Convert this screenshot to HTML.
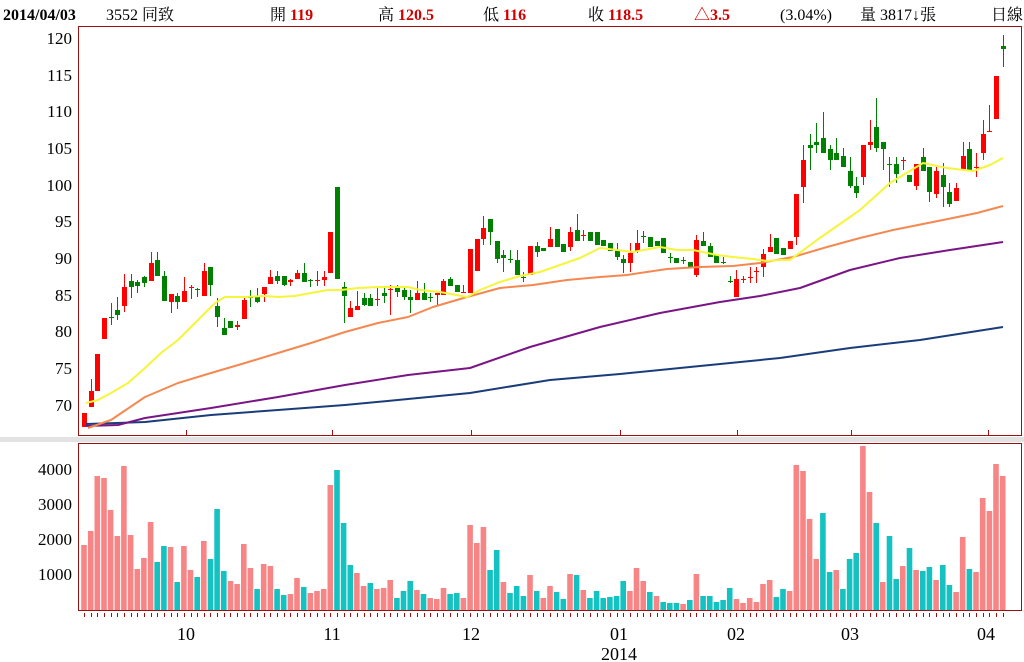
<!DOCTYPE html>
<html><head><meta charset="utf-8">
<style>
html,body{margin:0;padding:0;background:#fff;width:1024px;height:662px;overflow:hidden}
svg{display:block}
text{font-family:"Liberation Serif","Noto Serif CJK SC","Noto Sans CJK TC",serif}
</style></head><body>
<svg id="s" width="1024" height="662" viewBox="0 0 1024 662" xmlns="http://www.w3.org/2000/svg">
<rect x="0" y="0" width="1024" height="662" fill="#fff"/>
<!-- header -->
<g font-size="16">
<text x="3" y="20" font-weight="bold" fill="#000">2014/04/03</text>
<text x="106" y="20" fill="#000">3552 同致</text>
<text x="270" y="20" fill="#000">開 <tspan fill="#d00000" font-weight="bold">119</tspan></text>
<text x="378" y="20" fill="#000">高 <tspan fill="#d00000" font-weight="bold">120.5</tspan></text>
<text x="483" y="20" fill="#000">低 <tspan fill="#d00000" font-weight="bold">116</tspan></text>
<text x="588" y="20" fill="#000">收 <tspan fill="#d00000" font-weight="bold">118.5</tspan></text>
<text x="694" y="20" fill="#d00000" font-weight="bold">△3.5</text>
<text x="780" y="20" fill="#000">(3.04%)</text>
<text x="860" y="20" fill="#000">量 3817↓張</text>
<text x="991" y="20" fill="#000">日線</text>
</g>
<!-- gray band -->
<rect x="0" y="437" width="1024" height="5" fill="#e2e2e2"/>
<!-- frames -->
<rect x="78.5" y="26.5" width="943" height="409" fill="#fff" stroke="#9a1010" stroke-width="1"/>
<rect x="78.5" y="443.5" width="943" height="167" fill="#fff" stroke="#9a1010" stroke-width="1"/>
<!-- price labels -->
<g font-size="17" text-anchor="end" fill="#000">
<text x="72" y="44">120</text><text x="72" y="81">115</text><text x="72" y="117">110</text>
<text x="72" y="154">105</text><text x="72" y="191">100</text><text x="72" y="227">95</text>
<text x="72" y="264">90</text><text x="72" y="301">85</text><text x="72" y="337">80</text>
<text x="72" y="374">75</text><text x="72" y="411">70</text>
<text x="72" y="475">4000</text><text x="72" y="510">3000</text><text x="72" y="545">2000</text><text x="72" y="580">1000</text>
</g>
<!-- month labels -->
<g font-size="18" text-anchor="middle" fill="#000">
<text x="186" y="640">10</text><text x="332" y="640">11</text><text x="471" y="640">12</text>
<text x="619" y="640">01</text><text x="619" y="660">2014</text>
<text x="736" y="640">02</text><text x="850" y="640">03</text><text x="986" y="640">04</text>
</g>
<!-- main ticks -->
<g stroke="#9a1010" stroke-width="1">
<line x1="186.5" y1="430" x2="186.5" y2="435"/><line x1="332.5" y1="430" x2="332.5" y2="435"/>
<line x1="471.5" y1="430" x2="471.5" y2="435"/><line x1="620.5" y1="430" x2="620.5" y2="435"/>
<line x1="737.5" y1="430" x2="737.5" y2="435"/><line x1="851.5" y1="430" x2="851.5" y2="435"/>
<line x1="988.5" y1="430" x2="988.5" y2="435"/>
</g>
<g id="vol"></g>
<g id="ticks"></g>
<g id="cand"></g>
<!-- MAs -->
<g fill="none" stroke-width="2" stroke-linejoin="round">
<polyline stroke="#1a3d7a" points="86,424 145,422 211,415 278,410 345,405 408,399 470,393 550,380 620,374 700,366 780,358 850,348 920,340 1003,327"/>
<polyline stroke="#7a1585" points="86,426 118,425 145,418 211,408 278,397 345,385 408,375 470,368 530,347 600,327 660,313 720,302 760,296 800,288 850,270 900,258 950,250 1003,242"/>
<polyline stroke="#f58850" points="88,428 111,420 145,397 178,383 211,373 245,363 278,353 311,343 345,332 378,323 408,317 433,307 467,297 500,288 533,285 567,280 600,277 627,275 667,269 700,267 733,266 760,263 793,257 827,247 860,238 893,230 943,220 977,213 1003,206"/>
<polyline stroke="#f5f53a" points="86,403 98,400 111,393 128,383 145,368 161,353 178,340 191,327 205,313 215,303 225,297 245,297 265,296 278,297 295,296 311,293 328,290 341,290 358,288 378,287 395,287 408,287 420,290 440,292 467,297 480,290 500,282 520,276 540,272 560,265 580,258 600,248 617,250 633,252 660,247 677,250 693,250 717,255 733,257 753,259 767,261 780,260 790,260 817,240 860,210 890,183 923,163 947,168 973,171 990,165 1003,158"/>
</g>
</svg>
<script>
var NS="http://www.w3.org/2000/svg";
function el(p,n,a){var e=document.createElementNS(NS,n);for(var k in a)e.setAttribute(k,a[k]);p.appendChild(e);}
var X0=84,SP=6.657;
var V="65p 79p 134p 132p 100p 74p 144p 75p 41p 52p 88p 48t 64t 63p 28t 64p 40p 33t 69p 51t 101t 39t 29p 26p 66p 42p 21t 46p 44p 21t 15t 16p 32p 23t 17p 19p 21p 125p 140t 87t 45t 37p 24p 27t 21p 22p 30p 12t 19t 29t 20p 16t 12p 11p 22p 16t 17t 12p 85p 67p 83p 40t 60t 28p 17t 24t 14t 35p 19t 12p 24p 18t 11t 36p 35t 20p 12t 19t 12t 13t 14t 29t 19p 42p 29p 18t 14p 8t 7t 7t 6p 10t 36p 14t 14t 8t 10t 22t 11p 7p 12p 8p 26p 30p 13t 21t 19p 145p 139p 91p 51p 97t 38t 40p 21t 51t 57t 164p 118p 87t 28p 74t 31t 44p 62t 40p 39t 43t 30p 45t 25t 18p 73p 41t 38p 112p 99p 146p 134p".split(" ");
var vg=document.getElementById("vol"),tg=document.getElementById("ticks");
V.forEach(function(s,i){var h=parseFloat(s),c=s.slice(-1)=="p"?"#f88585":"#14c2c2";var x=X0+i*SP;
el(vg,"rect",{x:(x-2.8).toFixed(1),y:610-h,width:5.6,height:h,fill:c});
el(tg,"rect",{x:Math.round(x),y:613,width:1,height:4,fill:"#9a1010"});});
var C=[[413,427,413,427,1],[391,407,379,407,1],[354,391,354,391,1],[318,339,318,339,1],[317,317,303,325,0],[310,315,297,320,0],[287,306,274,312,1],[281,287,274,298,0],[282,286,280,293,0],[277,283,276,287,0],[263,281,252,281,1],[260,276,252,276,0],[276,301,271,301,0],[294,302,294,313,1],[296,302,293,309,0],[291,302,277,302,1],[287,287,285,299,1],[289,289,288,297,0],[271,296,263,296,1],[267,285,267,296,0],[306,317,298,327,0],[328,335,318,335,0],[321,328,321,328,0],[325,327,321,330,1],[300,319,296,319,1],[297,297,290,307,0],[297,302,288,303,0],[287,294,287,302,1],[277,284,270,284,1],[276,281,271,284,0],[276,285,276,286,0],[280,282,279,286,1],[273,279,270,279,1],[273,282,263,282,0],[280,280,279,287,0],[280,280,271,286,1],[277,280,271,286,1],[232,273,232,273,1],[187,279,187,279,0],[287,296,282,323,0],[308,317,301,317,1],[306,310,291,310,1],[298,305,293,306,0],[298,306,294,306,0],[299,299,288,306,1],[293,296,288,303,0],[289,289,285,315,1],[288,292,285,297,0],[290,297,288,300,0],[297,300,290,313,0],[293,300,281,300,1],[293,300,283,300,0],[297,297,293,302,0],[293,295,293,305,1],[281,295,279,295,1],[279,286,277,286,0],[285,292,285,292,0],[292,292,285,292,1],[249,293,249,293,1],[239,271,239,271,1],[228,239,216,245,1],[219,232,219,245,0],[241,259,241,263,0],[255,258,250,272,0],[259,259,250,263,0],[260,275,250,275,0],[277,277,272,282,0],[246,275,246,275,1],[246,252,242,257,0],[248,251,248,251,0],[239,247,227,247,1],[229,247,229,247,0],[244,252,244,252,0],[232,247,227,251,1],[230,241,214,241,0],[235,235,230,241,1],[232,241,232,241,0],[232,245,232,245,0],[240,246,240,246,0],[243,251,243,251,0],[251,257,243,260,0],[259,263,255,273,0],[253,263,243,272,1],[243,251,230,253,1],[236,236,231,243,0],[237,247,237,247,0],[241,246,241,246,0],[238,253,238,253,0],[257,257,253,263,0],[258,263,258,263,0],[260,260,257,264,0],[262,267,262,267,0],[240,275,235,277,1],[241,246,232,246,0],[246,257,243,257,0],[255,263,255,263,0],[262,262,257,264,0],[281,281,276,283,0],[279,297,270,297,1],[279,279,276,283,1],[277,277,267,283,1],[271,271,267,283,1],[254,267,249,277,1],[247,252,234,252,1],[238,254,238,254,0],[248,255,248,255,0],[241,249,241,249,1],[194,237,194,245,1],[160,187,145,203,1],[145,148,134,170,0],[142,145,123,153,0],[138,153,112,153,0],[149,160,145,170,0],[153,160,138,160,0],[156,167,148,167,0],[171,186,157,188,0],[186,193,177,198,0],[145,177,145,185,1],[142,145,120,150,1],[127,148,98,152,0],[142,149,142,170,0],[164,164,157,187,0],[164,174,157,183,0],[160,160,157,170,1],[175,182,175,182,0],[164,186,164,190,1],[157,171,148,171,0],[167,192,167,202,0],[171,194,167,198,1],[175,187,163,207,0],[192,204,183,207,0],[188,201,183,201,1],[156,169,142,169,1],[149,170,142,170,0],[167,167,153,177,1],[134,153,120,160,1],[131,131,105,131,1],[76,119,76,119,1],[46,49,35,67,0]];
var cg=document.getElementById("cand");
C.forEach(function(c,i){var x=Math.round(X0+i*SP),col=c[4]?"#ff0000":"#008000";
el(cg,"rect",{x:x,y:c[2],width:1,height:Math.max(1,c[3]-c[2]),fill:col});
var h=c[1]-c[0];if(h<2){el(cg,"rect",{x:x-2,y:c[0],width:5,height:1,fill:col});}
else el(cg,"rect",{x:x-2,y:c[0],width:5,height:h,fill:col});});
</script>
</body></html>
